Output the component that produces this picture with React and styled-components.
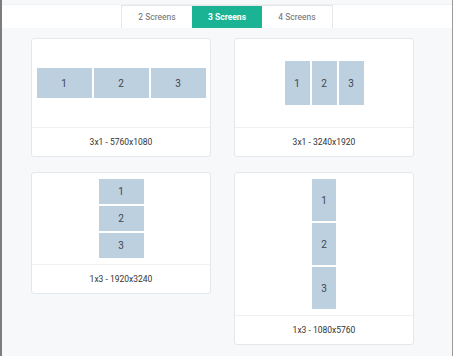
import React, { useState } from 'react';
import styled, { createGlobalStyle } from 'styled-components';

const GlobalStyle = createGlobalStyle`
  html, body {
    margin: 0;
    padding: 0;
    background: #f6f8fa;
  }
  body {
    font-family: Roboto, 'Liberation Sans', sans-serif;
  }
`;

const layouts = [
  { label: '3x1 - 5760x1080', dir: 'row', w: 55, h: 30 },
  { label: '3x1 - 3240x1920', dir: 'row', w: 25, h: 44 },
  { label: '1x3 - 1920x3240', dir: 'column', w: 45, h: 25 },
  { label: '1x3 - 1080x5760', dir: 'column', w: 24, h: 42 },
];

const Frame = styled.div`
  height: 356px;
  box-sizing: border-box;
  border-left: 2px solid #7d7d7d;
  border-right: 1px solid #9a9a9a;
  background: #f6f8fa;
  overflow: hidden;
`;

const Header = styled.div`
  background: #ffffff;
  border-top: 1px solid #eef0f2;
  margin-top: 4px;
  display: flex;
  justify-content: center;
`;

const Tabs = styled.div`
  display: flex;
  border: 1px solid #e6e6e6;
  border-bottom: none;
`;

const Tab = styled.div`
  width: 70px;
  height: 22px;
  display: flex;
  align-items: center;
  justify-content: center;
  font-size: 8.5px;
  cursor: pointer;
  color: ${({ active }) => (active ? '#ffffff' : '#6b6b6b')};
  font-weight: ${({ active }) => (active ? 700 : 400)};
  background: ${({ active }) => (active ? '#1ab394' : '#ffffff')};
`;

const Grid = styled.div`
  display: grid;
  grid-template-columns: 180px 180px;
  column-gap: 23px;
  row-gap: 15px;
  align-items: start;
  padding: 10px 0 0 29px;
`;

const Card = styled.div`
  background: #ffffff;
  border: 1px solid #e4e8ec;
  border-radius: 3px;
  box-sizing: border-box;
`;

const Preview = styled.div`
  min-height: 89px;
  box-sizing: border-box;
  padding: 6px;
  display: flex;
  align-items: center;
  justify-content: center;
  border-bottom: 1px solid #eef0f2;
`;

const Screens = styled.div`
  display: flex;
  flex-direction: ${({ dir }) => dir};
  gap: 2px;
`;

const Screen = styled.div`
  width: ${({ w }) => w}px;
  height: ${({ h }) => h}px;
  background: #bdd0df;
  display: flex;
  align-items: center;
  justify-content: center;
  font-size: 10px;
  color: #3e4650;
`;

const Caption = styled.div`
  height: 28px;
  display: flex;
  align-items: center;
  justify-content: center;
  font-size: 8.5px;
  color: #333;
`;

const App = () => {
  const [active, setActive] = useState(3);

  return (
    <Frame>
      <GlobalStyle />
      <Header>
        <Tabs>
          {[2, 3, 4].map(n => (
            <Tab key={n} active={active === n} onClick={() => setActive(n)}>
              {n} Screens
            </Tab>
          ))}
        </Tabs>
      </Header>
      <Grid>
        {layouts.map(layout => (
          <Card key={layout.label}>
            <Preview>
              <Screens dir={layout.dir}>
                {[1, 2, 3].map(i => (
                  <Screen key={i} w={layout.w} h={layout.h}>
                    {i}
                  </Screen>
                ))}
              </Screens>
            </Preview>
            <Caption>{layout.label}</Caption>
          </Card>
        ))}
      </Grid>
    </Frame>
  );
};

export default App;
